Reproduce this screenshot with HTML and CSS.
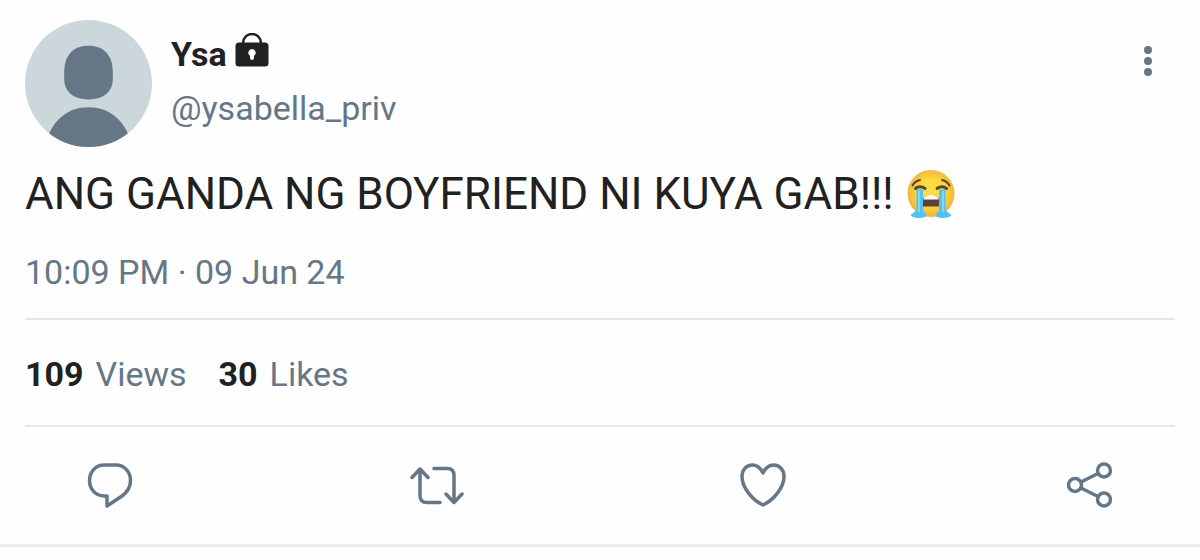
FILE: index.html
```html
<!DOCTYPE html>
<html lang="tl">
<head>
    <meta charset="UTF-8">
    <meta name="viewport" content="width=device-width, initial-scale=1.0">
    <title>Ysa (@ysabella_priv)</title>
    <link rel="stylesheet" href="styles.css">
</head>
<body>

    <article class="tweet">
        <header class="tweet-header">
            <svg class="avatar" viewBox="0 0 128 128" aria-hidden="true">
                <clipPath id="avatar-clip"><circle cx="64" cy="64" r="64"/></clipPath>
                <g clip-path="url(#avatar-clip)">
                    <rect width="128" height="128" fill="#cbd7db"/>
                    <path d="M64 26C80 26 88.500 36 88.500 53V59C88.500 72 80 80 64 80S39.500 72 39.500 59V53C39.500 36 48 26 64 26Z" fill="#657786"/>
                    <path d="M22 121C28 101 43 88 64 88S100 101 106 121V128H22Z" fill="#657786"/>
                </g>
            </svg>
            <div class="user">
                <div class="name">
                    <span>Ysa</span>
                    <svg class="lock" viewBox="0 0 34 34" aria-label="Private account">
                        <path d="M8 11V10a9 9 0 0 1 18 0V11" fill="none" stroke="#212121" stroke-width="2.500"/>
                        <rect x="0.500" y="9.500" width="33" height="24" rx="3.500" fill="#212121"/>
                        <path d="M17 16a3.700 3.700 0 0 1 2 6.800V25a2 2 0 0 1-4 0v-2.200A3.700 3.700 0 0 1 17 16Z" fill="#fff"/>
                    </svg>
                </div>
                <a class="handle" href="#">@ysabella_priv</a>
            </div>
            <button class="icon-button more" type="button" aria-label="More">
                <svg width="10" height="32" viewBox="0 0 10 32">
                    <circle cx="5" cy="5" r="4"/>
                    <circle cx="5" cy="16" r="4"/>
                    <circle cx="5" cy="27" r="4"/>
                </svg>
            </button>
        </header>

        <p class="tweet-text">
            <span>ANG GANDA NG BOYFRIEND NI KUYA GAB!!!</span>
            <svg class="emoji" viewBox="0 0 50 50" role="img" aria-label="Loudly crying face">
                <defs>
                    <radialGradient id="face" cx="50%" cy="48%" r="52%">
                        <stop offset="0.500" stop-color="#fddc3f"/>
                        <stop offset="1" stop-color="#f2b23a"/>
                    </radialGradient>
                </defs>
                <circle cx="25" cy="24.500" r="23.500" fill="url(#face)"/>
                <path d="M6.500 16.500Q9 12 14 11" fill="none" stroke="#5b4333" stroke-width="2" stroke-linecap="round"/>
                <path d="M43.500 16.500Q41 12 36 11" fill="none" stroke="#5b4333" stroke-width="2" stroke-linecap="round"/>
                <path d="M16.500 34C16.500 28.500 19 26 25 26S33.500 28.500 33.500 34V37.500H16.500Z" fill="#5f4235"/>
                <path d="M17.500 30.500C18.500 27 20.500 26 25 26S31.500 27 32.500 30.500Z" fill="#fff"/>
                <path d="M10.500 20.500H17V41C17 44 20.500 44 20.500 46.500C20.500 49.500 7 50 5 46.500C4 44.500 10.500 43.500 10.500 40Z" fill="#4fc3f2"/>
                <path d="M39.500 20.500H33V41C33 44 29.500 44 29.500 46.500C29.500 49.500 43 50 45 46.500C46 44.500 39.500 43.500 39.500 40Z" fill="#4fc3f2"/>
                <path d="M13 22V43M37 22V43" fill="none" stroke="#81d8f7" stroke-width="2"/>
                <path d="M9.500 19.500Q14 16 19 19.500" fill="none" stroke="#5b4333" stroke-width="3" stroke-linecap="round"/>
                <path d="M40.500 19.500Q36 16 31 19.500" fill="none" stroke="#5b4333" stroke-width="3" stroke-linecap="round"/>
            </svg>
        </p>

        <time class="date" datetime="2024-06-09T22:09">10:09 PM · 09 Jun 24</time>

        <div class="stats">
            <div class="stat"><strong>109</strong><span>Views</span></div>
            <div class="stat"><strong>30</strong><span>Likes</span></div>
        </div>

        <div class="actions">
            <button class="icon-button" type="button" aria-label="Reply">
                <svg width="46" height="48" viewBox="0 0 46 48">
                    <path d="M17 4H29C37.500 4 43.500 11 43.500 19.500C43.500 26 40.500 31 35 35L20 45V35H17C8.500 35 2.500 28 2.500 19.500S8.500 4 17 4Z"/>
                </svg>
            </button>
            <button class="icon-button" type="button" aria-label="Retweet">
                <svg width="54" height="48" viewBox="0 0 54 48">
                    <path d="M2 16.500L10 8L18 16.500M10 8V34.500Q10 41.500 17 41.500H30"/>
                    <path d="M24 7.500H37Q44 7.500 44 14.500V41M36 33L44 41.500L52 33"/>
                </svg>
            </button>
            <button class="icon-button" type="button" aria-label="Like">
                <svg width="46" height="48" viewBox="0 0 46 48">
                    <path d="M23 12C20.500 7 17 4 12.500 4C6 4 2 9 2 15.500C2 27.500 13.500 39.500 23 44C32.500 39.500 44 27.500 44 15.500C44 9 40 4 33.500 4C29 4 25.500 7 23 12Z"/>
                </svg>
            </button>
            <button class="icon-button" type="button" aria-label="Share">
                <svg width="46" height="48" viewBox="0 0 46 48">
                    <circle cx="8" cy="24" r="6.500"/>
                    <circle cx="37" cy="9.500" r="6.500"/>
                    <circle cx="37" cy="38.500" r="6.500"/>
                    <path d="M14 21L31 12.500M14 27L31 35.500"/>
                </svg>
            </button>
        </div>
    </article>

</body>
</html>
```
FILE: styles.css
```css
body {
    margin: 0;
    background-color: #fefefe;
    color: #212121;
    font-family: Roboto, sans-serif;
    font-size: 34px;
    line-height: 40px;
}
.tweet {
    padding: 20px 25px 0;
    border-bottom: 3px solid #ececec;
}
.tweet-header {
    display: flex;
    align-items: flex-start;
    gap: 19px;
}
.avatar {
    width: 127px;
    height: 127px;
    flex: none;
}
.user {
    flex: 1;
    display: flex;
    flex-direction: column;
    align-items: flex-start;
    gap: 14px;
    padding-top: 14px;
}
.name {
    display: flex;
    align-items: center;
    gap: 8px;
    height: 40px;
    font-weight: bold;
}
.lock {
    width: 34px;
    height: 34px;
    margin-bottom: 8px;
}
.handle {
    color: #657786;
    text-decoration: none;
}
.icon-button {
    display: flex;
    justify-content: center;
    padding: 0;
    border: none;
    background: none;
    cursor: pointer;
}
.icon-button svg {
    fill: none;
    stroke: #657786;
    stroke-width: 3.5;
    stroke-linecap: round;
    stroke-linejoin: round;
}
.more {
    margin: 25px 22px 0 0;
}
.more svg {
    fill: #657786;
    stroke: none;
}
.tweet-text {
    display: flex;
    align-items: center;
    gap: 12px;
    margin: 21px 0 32px;
    font-size: 44px;
    line-height: 52px;
}
.emoji {
    width: 50px;
    height: 50px;
    flex: none;
}
.date {
    display: block;
    padding-bottom: 26px;
    color: #657786;
}
.stats {
    display: flex;
    gap: 32px;
    padding: 34px 0 31px;
    border-top: 2px solid #e6e6e6;
    border-bottom: 2px solid #e6e6e6;
}
.stat {
    display: flex;
    gap: 12px;
}
.stat span {
    color: #657786;
}
.actions {
    display: flex;
    justify-content: space-between;
    padding: 34px 58px 35px;
}
.actions .icon-button {
    width: 54px;
}
```
